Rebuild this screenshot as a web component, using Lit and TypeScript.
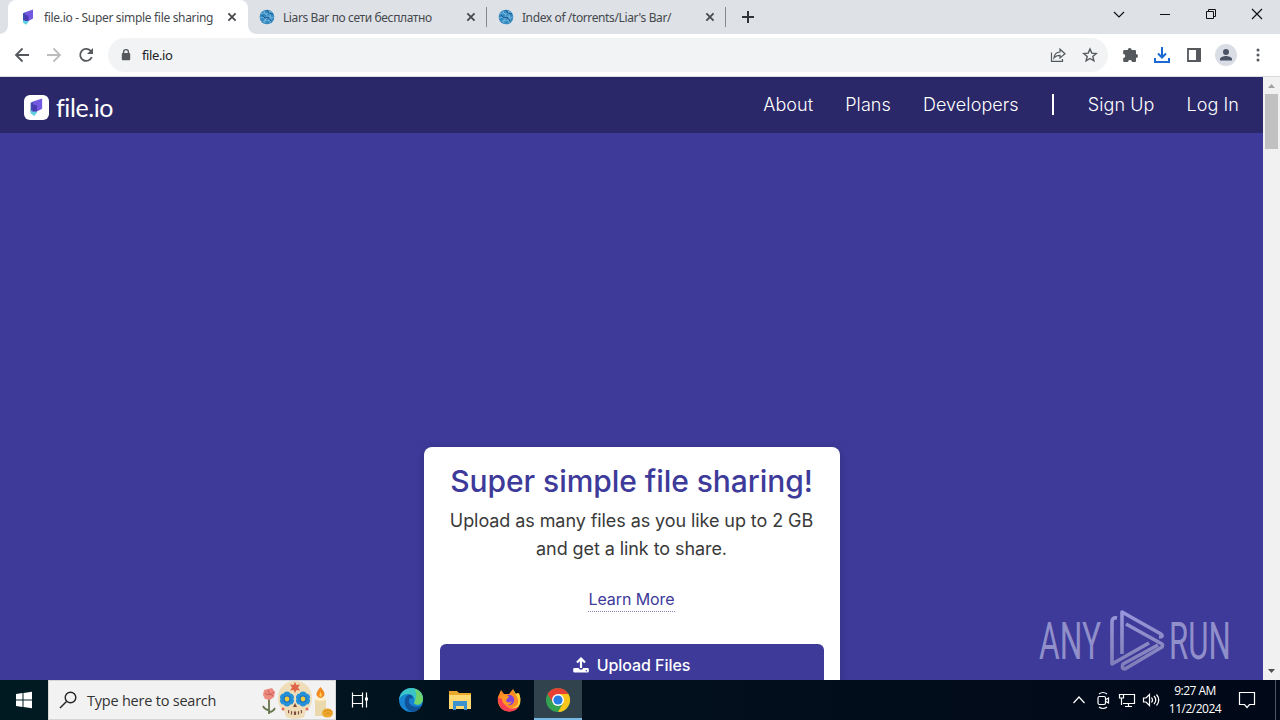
import { css, html, LitElement, svg, TemplateResult } from 'lit';
import { customElement, property } from 'lit/decorators.js';
import { classMap } from 'lit/directives/class-map.js';

const fileLogo = svg`
  <path d="M1 4.200 3.200 3.300v9L1 12.500z" fill="#3d4fae" />
  <path d="M1 11.500 6.500 9.500v3.500L4 15.800 1 13.500z" fill="#5ed0e0" />
  <path d="M3 3.300 11 .6v8.900L6.500 12 3 12z" fill="#7359e0" />
  <path d="M2.500 5.500 6.500 6.800v5L2.500 12z" fill="#4a3bb0" />
`;

const cross = (size: number) => svg`
  <path d="M${-size} ${-size} ${size} ${size}M${size} ${-size} ${-size} ${size}" />
`;

@customElement('browser-tab')
export class BrowserTab extends LitElement {
  static override styles = css`
    :host {
      display: block;
    }

    .tab {
      box-sizing: border-box;
      position: relative;
      display: flex;
      align-items: center;
      width: 239px;
      height: 34px;
      padding-left: 11px;
      color: #45494d;
      font: 12px 'Noto Sans', sans-serif;
      letter-spacing: -0.38px;
    }

    .active {
      width: 240px;
      padding-left: 12px;
      background: #fff;
      border-radius: 8px 8px 0 0;
    }

    .active::before,
    .active::after {
      content: '';
      position: absolute;
      bottom: 0;
      width: 8px;
      height: 8px;
    }

    .active::before {
      left: -8px;
      background: radial-gradient(circle at 0 0, transparent 7.5px, #fff 8px);
    }

    .active::after {
      right: -8px;
      background: radial-gradient(circle at 100% 0, transparent 7.5px, #fff 8px);
    }

    .icon {
      width: 16px;
      height: 16px;
      margin-right: 8px;
    }

    .title {
      width: 181px;
      white-space: nowrap;
    }

    .active .title {
      width: 180px;
      letter-spacing: -0.32px;
    }

    .close {
      width: 16px;
      height: 16px;
      stroke: #45494d;
      stroke-width: 1.8;
    }

    .separator {
      width: 1px;
      height: 20px;
      margin-left: 7px;
      background: #85888d;
    }
  `;

  @property()
  label: string = '';

  @property({ type: Boolean })
  active: boolean = false;

  private renderIcon() {
    if (this.active) {
      return html`<svg class="icon" viewBox="-2 0 16 16">${fileLogo}</svg>`;
    }

    return html`
      <svg class="icon" viewBox="0 0 16 16">
        <circle cx="8" cy="8" r="7.4" fill="#3589bf" />
        <path
          d="M2 5c4-3 5 2 7-1s3 1 5-1M1 9c4-2 5 2 7-1s4 2 7 0M4 13c2-4 4 0 6-2s2-1 3-1M5 2c0 3 4 3 3 6s-3 3-2 6M11 2c-2 3 2 4 0 7s1 3 0 5"
          fill="none"
          stroke="#9bd4f4"
          stroke-width=".6"
        />
        <path d="M3 6 6 9l3-1 3 4M8 1l2 3 4 1" fill="none" stroke="#18588e" stroke-width="1" />
      </svg>
    `;
  }

  override render() {
    return html`
      <div class=${classMap({ tab: true, active: this.active })}>
        ${this.renderIcon()}
        <span class="title">${this.label}</span>
        <svg class="close" viewBox="-8 -8 16 16">${cross(3.6)}</svg>
        ${this.active ? '' : html`<span class="separator"></span>`}
      </div>
    `;
  }
}

@customElement('browser-chrome')
export class BrowserChrome extends LitElement {
  static override styles = css`
    :host {
      display: block;
    }

    .strip {
      display: flex;
      height: 34px;
      padding-left: 8px;
      background: #dee1e6;
    }

    .plus {
      width: 16px;
      margin-left: 14px;
      stroke: #303338;
      stroke-width: 2;
    }

    .window {
      display: flex;
      height: 28px;
      margin-left: auto;
    }

    .window svg {
      width: 46px;
      height: 28px;
      fill: none;
      stroke: #111;
    }

    .toolbar {
      box-sizing: border-box;
      display: flex;
      align-items: center;
      height: 43px;
      padding: 0 6px 1px;
      border-bottom: 1px solid #dadce0;
      background: #fff;
    }

    .toolbar svg {
      flex: none;
      width: 32px;
      height: 32px;
      fill: none;
      stroke: #55585d;
      stroke-width: 1.8;
    }

    .toolbar .disabled {
      stroke: #babcbe;
    }

    .address {
      box-sizing: border-box;
      display: flex;
      align-items: center;
      width: 1000px;
      height: 34px;
      margin: 0 6px;
      padding: 0 2px;
      border-radius: 17px;
      background: #f1f3f4;
      color: #202124;
      font: 13px 'Noto Sans', sans-serif;
      letter-spacing: -0.4px;
    }

    .url {
      flex: 1;
    }

    .toolbar .thin {
      stroke-width: 1.2;
    }

    .toolbar .solid {
      fill: #55585d;
      stroke: none;
    }

    .toolbar .download {
      stroke: #1a69d3;
      stroke-width: 2;
    }
  `;

  override render() {
    return html`
      <div class="strip">
        <browser-tab label="file.io - Super simple file sharing" active></browser-tab>
        <browser-tab label="Liars Bar по сети бесплатно"></browser-tab>
        <browser-tab label="Index of /torrents/Liar's Bar/"></browser-tab>
        <svg class="plus" viewBox="-8 -17 16 34"><path d="M-6 0H6M0-6V6" /></svg>
        <div class="window">
          <svg viewBox="-23 -14 46 28"><path d="m-5-2 5 5 5-5" stroke-width="1.2" /></svg>
          <svg viewBox="-23 -14 46 28"><path d="M-5 .5H5" /></svg>
          <svg viewBox="-23 -14 46 28">
            <path d="M-4.5-2.5h7v7h-7zM-2.5-2.5v-2h7v7h-2" />
          </svg>
          <svg viewBox="-23 -14 46 28" stroke-width="1.2">${cross(5)}</svg>
        </div>
      </div>
      <div class="toolbar">
        <svg viewBox="-16 -16 32 32"><path d="M7 0H-6M.5-6.5-6 0 .5 6.5" /></svg>
        <svg class="disabled" viewBox="-16 -16 32 32"><path d="M-7 0H6M-.5-6.5 6 0-.5 6.5" /></svg>
        <svg viewBox="-16 -16 32 32">
          <path d="M5.8 2A6 6 0 1 1 4.5-4.3L6.4-2.4" />
          <path d="M7-7v6H1z" fill="#55585d" stroke="none" />
        </svg>
        <div class="address">
          <svg viewBox="-16 -16 32 32">
            <rect x="-4.2" y="-2" width="8.4" height="7.3" rx="1" fill="#55585d" stroke="none" />
            <path d="M-2.4-1.5V-3a2.4 2.4 0 0 1 4.8 0v1.5" stroke-width="1.4" />
          </svg>
          <span class="url">file.io</span>
          <svg class="thin" viewBox="-16 -16 32 32">
            <path d="M-6.5-2.5v8.8H4.5V4M-4 3c.4-4 2.6-5.8 6-6v-2.8L7-1.2 2 3V.3C-.8.3-2.5 1-4 3z" />
          </svg>
          <svg viewBox="-16 -16 32 32">
            <path
              d="m0-6 1.8 4.1 4.4.4-3.4 2.9 1.1 4.4L0 3.5l-3.9 2.3 1.1-4.4-3.4-2.9 4.4-.4z"
              stroke-width="1.4"
            />
          </svg>
        </div>
        <svg class="solid" viewBox="-16 -16 32 32">
          <path
            d="M-5.6-5h3.3a2 2 0 0 1 4 0h3c.8 0 1.3.5 1.3 1.3v2.7a2 2 0 0 1 0 4v2.7c0 .8-.5 1.3-1.3 1.3H2a2 2 0 0 0-4 0h-3.6c-.7 0-1.2-.5-1.2-1.3V3a2 2 0 0 0 0-4.1v-2.6c0-.8.5-1.3 1.2-1.3z"
          />
        </svg>
        <svg class="download" viewBox="-16 -16 32 32">
          <path d="M0-8V2.5M-4-1.5 0 2.5l4-4M-7 3v4H7V3" />
        </svg>
        <svg viewBox="-16 -16 32 32">
          <path d="M-6-6H6V6H-6z" />
          <path d="M2-6h5V6H2z" fill="#55585d" stroke="none" />
        </svg>
        <svg class="solid" viewBox="-16 -16 32 32">
          <circle r="11" fill="#dadde5" />
          <circle cy="-3" r="3" fill="#4a5366" />
          <path d="M-6 5.5V4C-6 2-2 1 0 1s6 1 6 3v1.5z" fill="#4a5366" />
        </svg>
        <svg class="solid" viewBox="-16 -16 32 32">
          <circle cy="-5" r="1.5" />
          <circle r="1.5" />
          <circle cy="5" r="1.5" />
        </svg>
      </div>
    `;
  }
}

@customElement('file-page')
export class FilePage extends LitElement {
  static override styles = css`
    :host {
      position: relative;
      display: flex;
      height: 603px;
      overflow: hidden;
      background: #3d3a9a;
      font-family: Inter, sans-serif;
    }

    .content {
      flex: 1;
      display: flex;
      flex-direction: column;
      align-items: center;
    }

    header {
      box-sizing: border-box;
      display: flex;
      align-items: center;
      width: 100%;
      height: 56px;
      flex: none;
      padding: 0 24px;
      background: #2a2868;
      color: #fff;
    }

    .mark {
      width: 25px;
      height: 25px;
      margin-top: 4px;
    }

    .brand {
      margin: 4px auto 0 7px;
      font: 25px/32px Lato, sans-serif;
      letter-spacing: -0.4px;
    }

    nav {
      display: flex;
      align-items: center;
      gap: 32px;
      margin-bottom: 1px;
      font-size: 18px;
      font-weight: 300;
      letter-spacing: 0.08px;
    }

    .divider {
      width: 2px;
      height: 21px;
      margin: 0 2px 0 1px;
      background: #fff;
    }

    .card {
      box-sizing: border-box;
      width: 416px;
      height: 300px;
      flex: none;
      margin-top: 314px;
      padding: 14px 16px;
      border-radius: 8px;
      background: #fff;
      box-shadow: 0 2px 8px #0003;
      text-align: center;
    }

    h1 {
      margin: 0;
      color: #3d3a9a;
      font-size: 30px;
      font-weight: 500;
      line-height: 40px;
      letter-spacing: -0.06px;
    }

    p {
      margin: 6px 0 0;
      color: #3a3a3a;
      font-size: 18px;
      line-height: 28px;
      letter-spacing: -0.08px;
    }

    .more {
      display: inline-block;
      margin-top: 25px;
      border-bottom: 1px dotted #8a88c4;
      color: #3d3a9a;
      font-size: 16px;
      line-height: 23px;
      letter-spacing: -0.08px;
    }

    .upload {
      display: flex;
      justify-content: center;
      align-items: center;
      gap: 8px;
      height: 42px;
      margin-top: 32px;
      border-radius: 6px;
      background: #3d3a9a;
      color: #fff;
      font-size: 16px;
      font-weight: 500;
      letter-spacing: -0.06px;
    }

    .upload svg {
      width: 16px;
      height: 16px;
    }

    .scrollbar {
      display: flex;
      flex-direction: column;
      align-items: center;
      width: 17px;
      background: #f1f1f1;
    }

    .scrollbar svg {
      width: 17px;
      height: 17px;
    }

    .thumb {
      width: 13px;
      height: 55px;
      margin-bottom: auto;
      background: #c1c1c1;
    }

    .watermark {
      position: absolute;
      right: 40px;
      bottom: 5px;
      width: 205px;
      height: 70px;
      opacity: 0.86;
    }
  `;

  override render() {
    return html`
      <div class="content">
        <header>
          <svg class="mark" viewBox="0 0 25 25">
            <rect width="25" height="25" rx="6" fill="#fff" />
            <g transform="translate(5.5 2.8) scale(1.15)">${fileLogo}</g>
          </svg>
          <span class="brand">file.io</span>
          <nav>
            <span>About</span>
            <span>Plans</span>
            <span>Developers</span>
            <span class="divider"></span>
            <span>Sign Up</span>
            <span>Log In</span>
          </nav>
        </header>
        <div class="card">
          <h1>Super simple file sharing!</h1>
          <p>Upload as many files as you like up to 2 GB and get a link to share.</p>
          <span class="more">Learn More</span>
          <div class="upload">
            <svg viewBox="0 0 16 16">
              <path d="M8 11V2M4 5.5 8 1.5l4 4" fill="none" stroke="#fff" stroke-width="2.2" />
              <path
                d="M1.5 11h4.3a2.3 2.3 0 0 0 4.4 0h4.3a1.3 1.3 0 0 1 1.3 1.3v2a1.3 1.3 0 0 1-1.3 1.3h-13A1.3 1.3 0 0 1 .2 14.3v-2A1.3 1.3 0 0 1 1.5 11z"
                fill="#fff"
              />
              <circle cx="13.3" cy="13.8" r=".7" fill="#3d3a9a" />
            </svg>
            Upload Files
          </div>
        </div>
      </div>
      <div class="scrollbar">
        <svg viewBox="0 0 17 17"><path d="m5 11 3.5-4L12 11z" fill="#a3a3a3" /></svg>
        <div class="thumb"></div>
        <svg viewBox="0 0 17 17"><path d="m5 6 3.5 4L12 6z" fill="#505050" /></svg>
      </div>
      <svg class="watermark" viewBox="1035 605 205 70">
        <defs>
          <linearGradient id="fade" gradientUnits="userSpaceOnUse" x1="0" y1="610" x2="0" y2="672">
            <stop offset="0" stop-color="#a9a6e8" />
            <stop offset=".55" stop-color="#9997ca" />
            <stop offset="1" stop-color="#8886bd" />
          </linearGradient>
        </defs>
        <g fill="#9f9dd2" font-family="Roboto, sans-serif" font-size="52" font-weight="400">
          <text transform="translate(1039 659) scale(.61 1)">ANY</text>
          <text transform="translate(1169 659) scale(.6 1)">RUN</text>
        </g>
        <g fill="none" stroke="url(#fade)" stroke-width="3.6" stroke-linejoin="round">
          <path d="M1117 618q-5-1-5 4V664L1149 643" />
          <path d="M1122 654V612L1161 634q3 3-2 3" />
          <path d="M1126 624 1162 644q1 1 0 3L1125 669q-4 0-2-5L1158 645" />
        </g>
      </svg>
    `;
  }
}

@customElement('task-bar')
export class TaskBar extends LitElement {
  static override styles = css`
    :host {
      display: flex;
      height: 40px;
      background: linear-gradient(90deg, #001a22, #020f1c 50%, #010918);
      color: #fff;
      font: 12px/18px 'Open Sans', sans-serif;
    }

    svg {
      display: block;
      flex: none;
      fill: none;
    }

    .search {
      box-sizing: border-box;
      display: flex;
      align-items: center;
      width: 288px;
      border: 1px solid #d3d5d6;
      background: #f2f2f2;
      color: #333;
      font-size: 14.5px;
    }

    .placeholder {
      flex: 1;
      padding-top: 2px;
      letter-spacing: -0.22px;
    }

    .app {
      margin-right: 1px;
    }

    .app.active {
      margin-right: 0;
      background: #31444e;
      box-shadow: inset 0 -2px #76b9e4;
    }

    .tray {
      display: flex;
      align-items: center;
      margin-left: auto;
      stroke: #fff;
      stroke-width: 1.2;
    }

    .clock {
      width: 64px;
      text-align: center;
      letter-spacing: -0.5px;
    }

    .desktop {
      width: 4px;
      height: 40px;
      margin-left: 8px;
      border-left: 1px solid #4b5563;
    }
  `;

  private renderSkull() {
    const petals = [0, 60, 120, 180, 240, 300];
    const flower = (x: number) => svg`
      <g transform="translate(${x} 18)">
        ${petals.map((a) => svg`<circle cy="-4" r="3.4" fill="#2490d8" transform="rotate(${a})" />`)}
        <circle r="3.6" fill="#1b6fbd" />
        <circle r="2.4" fill="#f1cb3d" />
      </g>
    `;

    return html`
      <svg width="75" height="38" viewBox="1 0 75 38">
        <path d="M10 17v16M10 29c-4 0-5-2-6-4M10 31c3 0 5-2 6-4" stroke="#66764c" stroke-width="1.8" />
        <path d="M4 14 5 9l4-1 4-1 3 4-1 5-4 3-5-1z" fill="#ed8b80" />
        <path d="M6 12q4 4 9-1M9 9q0 4 5 6" stroke="#c95d59" />
        <path d="M36 0c10 0 17 7 17 17 0 6-2 10-6 12l-2 7q-9 4-18 0l-2-7c-4-2-6-6-6-12C19 7 26 0 36 0z" fill="#efddb9" />
        <path d="m36 1 1.500 3 3.500-.500-2 3 2 3-3.500-.500L36 12l-1.500-3-3.500.500 2-3-2-3 3.500.500z" fill="#df6549" />
        ${flower(28)}${flower(44)}
        <path d="m36 22 2 4h-4zM29 29q7 3 14 0v3q-7 4-14 0z" fill="#7c4b3e" />
        <path d="M31 29.500v3.500M34 30v4M38 30v4M41 29.500v3.500" stroke="#efddb9" stroke-width="1.800" />
        <circle cx="24" cy="28" r="1.5" fill="#dd6a57" />
        <circle cx="48" cy="28" r="1.5" fill="#dd6a57" />
        <path d="M56 18q6-3 11 0v17H56z" fill="#ead9ad" />
        <ellipse cx="61.5" cy="18" rx="5.5" ry="1.8" fill="#fff0c8" />
        <path d="M61.5 6q8 9 0 11-8-2 0-11z" fill="#f18a20" />
        <path d="M61.5 11q2 4 0 5-2-1 0-5z" fill="#ffd65b" />
        <ellipse cx="68.5" cy="32" rx="5.5" ry="4.5" fill="#eda82d" />
        <path d="M65 31q4-4 8 0M66 34q3-4 6 0" stroke="#d98a1c" />
      </svg>
    `;
  }

  private renderApp(icon: TemplateResult, active = false) {
    return html`
      <svg class=${classMap({ app: true, active })} width="48" height="40" viewBox="-24 -20 48 40">
        ${icon}
      </svg>
    `;
  }

  override render() {
    return html`
      <svg width="48" height="40" viewBox="0 0 48 40">
        <path
          d="m16 14 6.5-1v6.500H16zm7.500-1.100L32 11.700v7.800h-8.500zM16 20.500h6.500V27L16 26zm7.500 0H32v7.800l-8.500-1.200z"
          fill="#fff"
        />
      </svg>
      <div class="search">
        <svg width="38" height="38" viewBox="0 0 38 38" stroke="#222" stroke-width="1.4">
          <circle cx="21.5" cy="16.5" r="5.3" />
          <path d="m17.5 20.5-6.5 6.500" />
        </svg>
        <span class="placeholder">Type here to search</span>
        ${this.renderSkull()}
      </div>
      <svg width="51" height="40" viewBox="-24 -20 51 40" stroke="#fff" stroke-width="1.2">
        <path d="M-7.5-7.5v3h10v-3M-7.5-4.5h10v8h-10zM-7.5 7.5v-4M2.5 7.5v-4M6.5-7.5v15" />
        <path d="M5-2.5h3v3H5z" fill="#fff" stroke="none" />
      </svg>
      ${this.renderApp(svg`
        <circle r="12" fill="#1684d2" />
        <path d="M-12 0C-11-8-5-12 0-12c8 0 13 6 12 12-1 5-7 6-9 3C5-2 2-6-3-6c-5 0-8 3-9 6z" fill="#3cc5c6" />
        <path d="M3-11.6C9-10 12-5 12 0c-1 5-7 6-9 3C6-2 6-8 3-11.6z" fill="#6fd26b" />
        <path d="M-3-5c-5 3-5 16 6 16.7 3-.7 6-3 7.5-5.700C5 8-3 6-2 0c.3-2 3-3 4-1 0-4-3-5-5-4z" fill="#105398" />
      `)}
      ${this.renderApp(svg`
        <path d="M-11-9h8l2 2h12V9h-22z" fill="#e9a92c" />
        <path d="M-11-5h22V9h-22z" fill="#ffda73" />
        <path d="M-7 1H7v9H4V6h-8v4h-3z" fill="#3c91cf" />
      `)}
      ${this.renderApp(svg`
        <path d="M-8-10-5-6 0-6 4-11 6-6 10-7C13 0 11 11 0 11.5-9 11-12 4-11-3z" fill="#ff8a24" />
        <path d="M4-11C5-5 10-4 9 3 7 9-3 10-7 4-8 11 7 14 11 4 12-2 11-5 9-7L7-6z" fill="#ffd33d" />
        <path d="M-11-2C-11 7-5 11.5 0 11.5c5 0 8-2 10-5C2 11-6 7-6-1z" fill="#fa3e55" />
        <circle r="5.3" fill="#8443d8" />
        <path d="M-8-4c5-2 7-1 8 1L-3 0c0 3 4 3 6 1C1 7-6 6-7 0z" fill="#ff9825" />
      `)}
      ${this.renderApp(
        svg`
          <circle r="12" fill="#34a351" />
          <path d="M0-6h10.4A12 12 0 0 0-10.4-6L-5 3z" fill="#e64134" />
          <path d="M5.2 3 0 12A12 12 0 0 0 10.4-6H0z" fill="#fbc61c" />
          <circle r="6" fill="#fff" />
          <circle r="4.6" fill="#267de4" />
        `,
        true
      )}
      <div class="tray">
        <svg width="24" height="24" viewBox="-12 -12 24 24"><path d="m-5.5 3 5.5-6 5.5 6" /></svg>
        <svg width="24" height="24" viewBox="-12 -12 24 24">
          <rect x="-5" y="-3.5" width="7.5" height="8" rx="1.5" />
          <path d="m3-.5 2.5-1.5v5L3 1.500M-4-6q4-3 8 0M-4 7q4 3 8 0" />
        </svg>
        <svg width="24" height="24" viewBox="-12 -12 24 24">
          <path d="M-3-5.5H7.5v9H-4M-2 6.5h7M1.5 4v2.5M-7.5-5.5h4v3.5h-4zM-5.5-2v7" />
        </svg>
        <svg width="24" height="24" viewBox="-12 -12 24 24">
          <path d="M-7.5-2h2.5l3.5-3.500v11L-5 2h-2.500zM.5-2.500q2 2.500 0 5M3-4q3.500 4 0 8M5.500-5.500q4.500 5.500 0 11" />
        </svg>
        <div class="clock">9:27 AM<br />11/2/2024</div>
        <svg width="40" height="40" viewBox="-20 -20 40 40">
          <path d="M-7.5-7.5h15v12h-5L0 7.500-2.500 4.500h-5z" />
        </svg>
        <div class="desktop"></div>
      </div>
    `;
  }
}

@customElement('app-root')
export class AppRoot extends LitElement {
  static override styles = css`
    :host {
      display: block;
      width: 1280px;
      height: 720px;
      overflow: hidden;
    }
  `;

  override render() {
    return html`
      <browser-chrome></browser-chrome>
      <file-page></file-page>
      <task-bar></task-bar>
    `;
  }
}
